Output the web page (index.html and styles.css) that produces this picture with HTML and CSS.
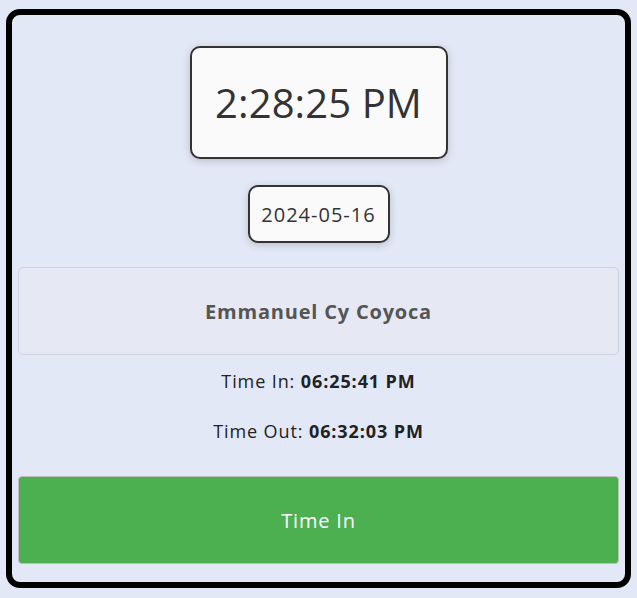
FILE: index.html
```html
<!DOCTYPE html>
<html lang="en">
<head>
<meta charset="utf-8">
<title>Time Clock</title>
<link rel="stylesheet" href="styles.css">
</head>
<body>
<main class="card">
  <div class="clock">2:28:25 PM</div>
  <div class="date">2024-05-16</div>
  <div class="name">Emmanuel Cy Coyoca</div>
  <p class="log log-in">Time In: <strong>06:25:41 PM</strong></p>
  <p class="log log-out">Time Out: <strong>06:32:03 PM</strong></p>
  <button class="action" type="button">Time In</button>
</main>
</body>
</html>
```
FILE: styles.css
```css
* { box-sizing: border-box; }
html, body { margin: 0; }
body {
  background: #e3e8f6;
  padding: 9px 6px 10px;
  font-family: "Open Sans", "Noto Sans", sans-serif;
  color: #222;
}
.card {
  height: 579px;
  border: 6px solid #000;
  border-radius: 14px;
  padding: 31px 6px 18px;
  display: flex;
  flex-direction: column;
  align-items: center;
  background: #e3e8f6;
}
.clock {
  width: 258px;
  height: 113px;
  border: 2px solid #333;
  border-radius: 10px;
  background: #fafafa;
  box-shadow: 0 2px 8px rgba(0,0,0,0.18);
  display: flex;
  align-items: center;
  justify-content: center;
  font-size: 40px;
  color: #333;
  letter-spacing: 0.1px;
}
.date {
  margin-top: 26px;
  width: 142px;
  height: 58px;
  border: 2px solid #333;
  border-radius: 10px;
  background: #fafafa;
  box-shadow: 0 2px 8px rgba(0,0,0,0.18);
  display: flex;
  align-items: center;
  justify-content: center;
  font-size: 20px;
  color: #333;
  letter-spacing: 1px;
}
.name {
  margin-top: 24px;
  align-self: stretch;
  height: 88px;
  border: 1px solid #cfd2d8;
  border-radius: 5px;
  background: #e6e9f3;
  display: flex;
  align-items: center;
  justify-content: center;
  font-size: 20px;
  font-weight: 700;
  color: #555;
  letter-spacing: 0.8px;
}
.log {
  margin: 0;
  height: 30px;
  line-height: 30px;
  font-size: 18px;
  color: #222;
  text-align: center;
  letter-spacing: 0.9px;
}
.log strong { font-weight: 700; }
.log-in { margin-top: 11px; }
.log-out { margin-top: 20px; }
.action {
  margin-top: 30px;
  align-self: stretch;
  height: 88px;
  border: 1px solid #bdbdbd;
  border-radius: 4px;
  background: #4caf50;
  color: #fff;
  font-family: inherit;
  font-size: 20px;
  letter-spacing: 0.8px;
  cursor: pointer;
}
```
